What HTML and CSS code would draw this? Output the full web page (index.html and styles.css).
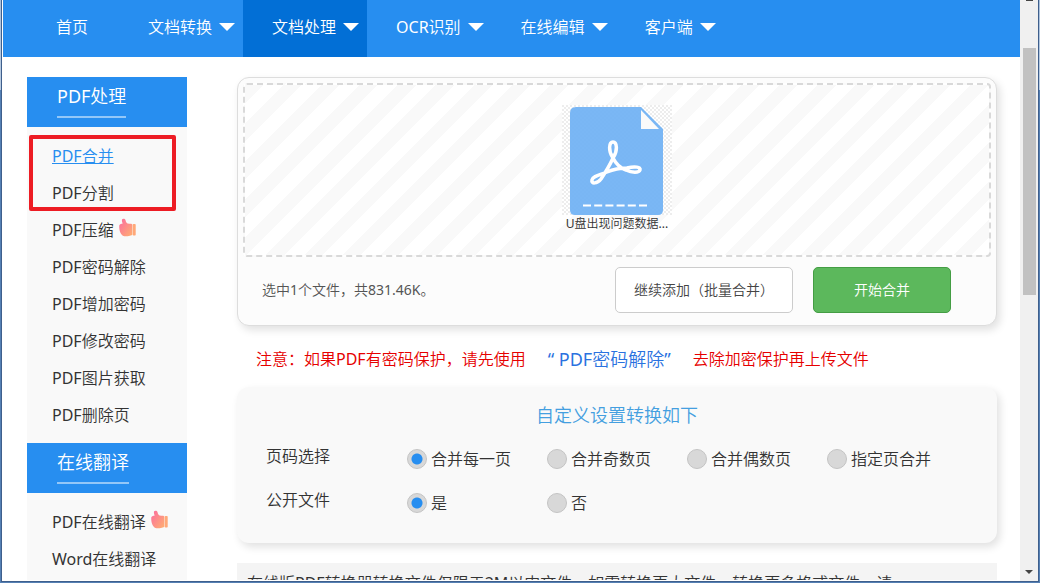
FILE: index.html
```html
<!DOCTYPE html>
<html lang="zh-CN">
<head>
<meta charset="utf-8">
<title>PDF合并</title>
<link rel="stylesheet" href="styles.css">
</head>
<body>
<svg class="defs" aria-hidden="true">
  <defs>
    <linearGradient id="thumb-fill" x1="0" y1="0" x2="1" y2="1"><stop offset="0" stop-color="#fb6aa0"/><stop offset="1" stop-color="#ffb070"/></linearGradient>
    <symbol id="thumb" viewBox="0 0 17 19"><path fill="url(#thumb-fill)" d="M3 1.600C3.500.2 6 .300 6.500 2c.2 1.500.7 2.700 2 3.600 1.500.400 3-.2 4.300.300.500.300.500.700.500 1.200v9.500c-.2.700-.8.900-1.500.9-2 .900-6 1-8 .2C1 16 0 11 .3 7.300 1 6 2.500 5.800 3.700 5.500 3.100 4.300 2.700 3 3 1.600Z"/><rect x="13.700" y="6" width="3" height="11.500" rx=".8" fill="#ffa878"/></symbol>
  </defs>
</svg>
<div class="window">
  <div class="page">
    <nav class="nav">
      <a class="nav-item" href="#">首页</a>
      <a class="nav-item has-menu" href="#">文档转换</a>
      <a class="nav-item has-menu active" href="#">文档处理</a>
      <a class="nav-item has-menu" href="#">OCR识别</a>
      <a class="nav-item has-menu" href="#">在线编辑</a>
      <a class="nav-item has-menu" href="#">客户端</a>
    </nav>
    <div class="columns">
      <aside class="sidebar">
        <h2 class="side-title"><span>PDF处理</span></h2>
        <ul class="side-list">
          <li><a class="current" href="#">PDF合并</a></li>
          <li><a href="#">PDF分割</a></li>
          <li><a href="#">PDF压缩</a><svg class="thumb"><use href="#thumb"/></svg></li>
          <li><a href="#">PDF密码解除</a></li>
          <li><a href="#">PDF增加密码</a></li>
          <li><a href="#">PDF修改密码</a></li>
          <li><a href="#">PDF图片获取</a></li>
          <li><a href="#">PDF删除页</a></li>
        </ul>
        <h2 class="side-title"><span>在线翻译</span></h2>
        <ul class="side-list">
          <li><a href="#">PDF在线翻译</a><svg class="thumb"><use href="#thumb"/></svg></li>
          <li><a href="#">Word在线翻译</a></li>
        </ul>
        <div class="highlight"></div>
      </aside>
      <main class="main">
        <section class="upload">
          <div class="dropzone">
            <figure class="file">
              <svg class="file-icon" viewBox="0 0 110 110" aria-hidden="true">
                <defs><pattern id="checker" width="4" height="4" patternUnits="userSpaceOnUse"><path fill="#000" fill-opacity=".07" d="M0 0h2v2H0zM2 2h2v2H2z"/></pattern></defs>
                <rect width="110" height="110" fill="#fff"/>
                <rect width="110" height="110" fill="url(#checker)"/>
                <path fill="#72b3f4" fill-opacity=".94" d="M14 2h65l22 22v81q0 5-5 5H13q-5 0-5-5V8q0-6 6-6Z"/>
                <path fill="#fafafa" d="M79 5v19h18Z"/>
                <path fill="none" stroke="#fff" stroke-width="3.500" stroke-linejoin="round" d="M51 53C46 46 47 37 51 37s5 9 0 16c-4 9-8 15-12 21-4 5-10 5-9 1s8-5 15-8c7-3 13-4 20-4 8-2 14-1 13 2s-8 3-14 0c-6-2-10-6-13-12"/>
                <path stroke="#fff" stroke-width="2" stroke-dasharray="8 3.200" d="M21 100.500h64"/>
              </svg>
              <figcaption>U盘出现问题数据...</figcaption>
            </figure>
          </div>
          <div class="upload-bar">
            <p class="summary">选中1个文件，共831.46K。</p>
            <button class="btn btn-add" type="button">继续添加（批量合并）</button>
            <button class="btn btn-start" type="button">开始合并</button>
          </div>
        </section>
        <p class="notice"><span>注意：如果PDF有密码保护，请先使用</span><a href="#">“ PDF密码解除”</a><span>去除加密保护再上传文件</span></p>
        <form class="settings">
          <h3 class="settings-title">自定义设置转换如下</h3>
          <div class="row" role="radiogroup" aria-labelledby="pages-label">
            <span class="row-label" id="pages-label">页码选择</span>
            <label class="option"><input type="radio" name="pages" checked>合并每一页</label>
            <label class="option"><input type="radio" name="pages">合并奇数页</label>
            <label class="option"><input type="radio" name="pages">合并偶数页</label>
            <label class="option"><input type="radio" name="pages">指定页合并</label>
          </div>
          <div class="row" role="radiogroup" aria-labelledby="public-label">
            <span class="row-label" id="public-label">公开文件</span>
            <label class="option"><input type="radio" name="public" checked>是</label>
            <label class="option"><input type="radio" name="public">否</label>
          </div>
        </form>
        <p class="tips">在线版PDF转换器转换文件仅限于2M以内文件，如需转换更大文件，转换更多格式文件，请</p>
      </main>
    </div>
  </div>
  <div class="scrollbar" aria-hidden="true"><span class="arrow-up"></span><span class="thumb-bar"></span><span class="arrow-down"></span></div>
</div>
</body>
</html>
```
FILE: styles.css
```css
* { box-sizing: border-box; }
body {
  margin: 0;
  padding: 0 1px 1px;
  font: 400 16px/24px "Noto Sans", "Noto Sans CJK SC DemiLight", "Noto Sans CJK SC", sans-serif;
  color: #333;
  background: linear-gradient(#a9c0dc, #b9cce2 90px, #5580b4 90px, #5580b4);
}
h2, h3, p, ul, figure { margin: 0; padding: 0; font-weight: inherit; }
a { color: inherit; text-decoration: none; }
.defs { position: absolute; width: 0; height: 0; }

.window {
  display: flex;
  height: calc(100vh - 1px);
  overflow: hidden;
  border: 1px solid #3f5f8c;
  border-top: 0;
  background: #fff;
}
.page { flex: 1; min-width: 0; overflow: hidden; padding-left: 1px; border-bottom: 1px solid #fff; }

.nav { display: flex; height: 57px; padding-left: 24px; background: #278ef0; color: #fff; }
.nav-item { display: flex; align-items: center; padding: 0 31px 4px 29px; white-space: nowrap; }
.has-menu { padding-right: 8px; }
.has-menu::after {
  content: "";
  margin-left: 7px;
  border: 8px solid transparent;
  border-top-color: #fff;
  border-bottom: 0;
}
.active { background: #026fd6; }

.columns { display: flex; gap: 50px; padding: 20px 23px 0 24px; }
.sidebar { position: relative; flex: none; width: 160px; background: #f9f9f9; }
.side-title { height: 50px; padding: 3px 0 0 30px; background: #278ef0; color: #fff; font-size: 18px; line-height: 32px; }
.side-title span { display: inline-block; padding-bottom: 4px; border-bottom: 2px solid #93c7f8; }
.side-list { list-style: none; padding: 10px 0 10px 25px; }
.side-list li { display: flex; align-items: center; gap: 5px; height: 37px; white-space: nowrap; }
.side-list .current { color: #278ef0; text-decoration: underline; }
.thumb { width: 17px; height: 19px; margin-bottom: 4px; }
.highlight { position: absolute; top: 58px; left: 2px; width: 147px; height: 76px; border: 4px solid #ed1c24; border-radius: 2px; }

.main { flex: 1; min-width: 0; }
.upload { padding: 5px; border: 1px solid #ddd; border-radius: 12px; background: #fcfcfc; box-shadow: 3px 4px 8px rgba(0, 0, 0, .12); }
.dropzone {
  display: flex;
  justify-content: center;
  height: 174px;
  padding-top: 20px;
  border: 2px dashed #d9d9d9;
  border-radius: 4px;
  background: repeating-linear-gradient(135deg, #f9f9f9 0 13px, #fff 13px 27px);
}
.file { width: 110px; text-align: center; font-size: 12px; line-height: 18px; white-space: nowrap; }
.file-icon { display: block; width: 110px; height: 110px; }
.upload-bar { display: flex; align-items: center; gap: 20px; padding: 10px 40px 7px 19px; font-size: 14px; color: #555; }
.summary { flex: 1; }
.btn { height: 46px; border: 1px solid #ccc; border-radius: 5px; background: #fff; color: #444; font: inherit; }
.btn-add { width: 178px; padding: 0; }
.btn-start { width: 138px; border-color: #449d44; background: #5cb85c; color: #fff; }

.notice { display: flex; align-items: center; height: 61px; padding: 4px 0 0 19px; gap: 22px; color: #e60000; white-space: nowrap; }
.notice a { font-size: 18px; color: #2a72e0; }

.settings { height: 156px; padding: 12px 29px; border-radius: 12px; background: #f9f9f9; box-shadow: 3px 4px 8px rgba(0, 0, 0, .12); }
.settings-title { margin-bottom: 4px; text-align: center; font-size: 18px; line-height: 32px; color: #449fe0; }
.row { display: flex; align-items: center; height: 44px; padding-top: 4px; }
.row-label { width: 141px; padding-bottom: 6px; }
.option { display: flex; align-items: center; gap: 4px; width: 140px; white-space: nowrap; }
.option input {
  appearance: none;
  width: 20px;
  height: 20px;
  margin: 0;
  border: 1px solid #c4c4c4;
  border-radius: 50%;
  background: #d8d8d8;
}
.option input:checked { background: radial-gradient(circle, #278ef0 5px, #d8d8d8 6px); }
.tips { margin-top: 20px; padding: 8px 10px; background: #f4f4f4; white-space: nowrap; overflow: hidden; }

.scrollbar { display: flex; flex-direction: column; align-items: center; justify-content: space-between; width: 18px; padding-bottom: 7px; background: #f0f0f0; }
.arrow-up { width: 7px; height: 1px; background: #444; }
.thumb-bar { width: 13px; height: 247px; margin: 47px 0 auto; background: #c1c1c1; }
.arrow-down { border: 4px solid transparent; border-top-color: #444; border-bottom: 0; }
```
